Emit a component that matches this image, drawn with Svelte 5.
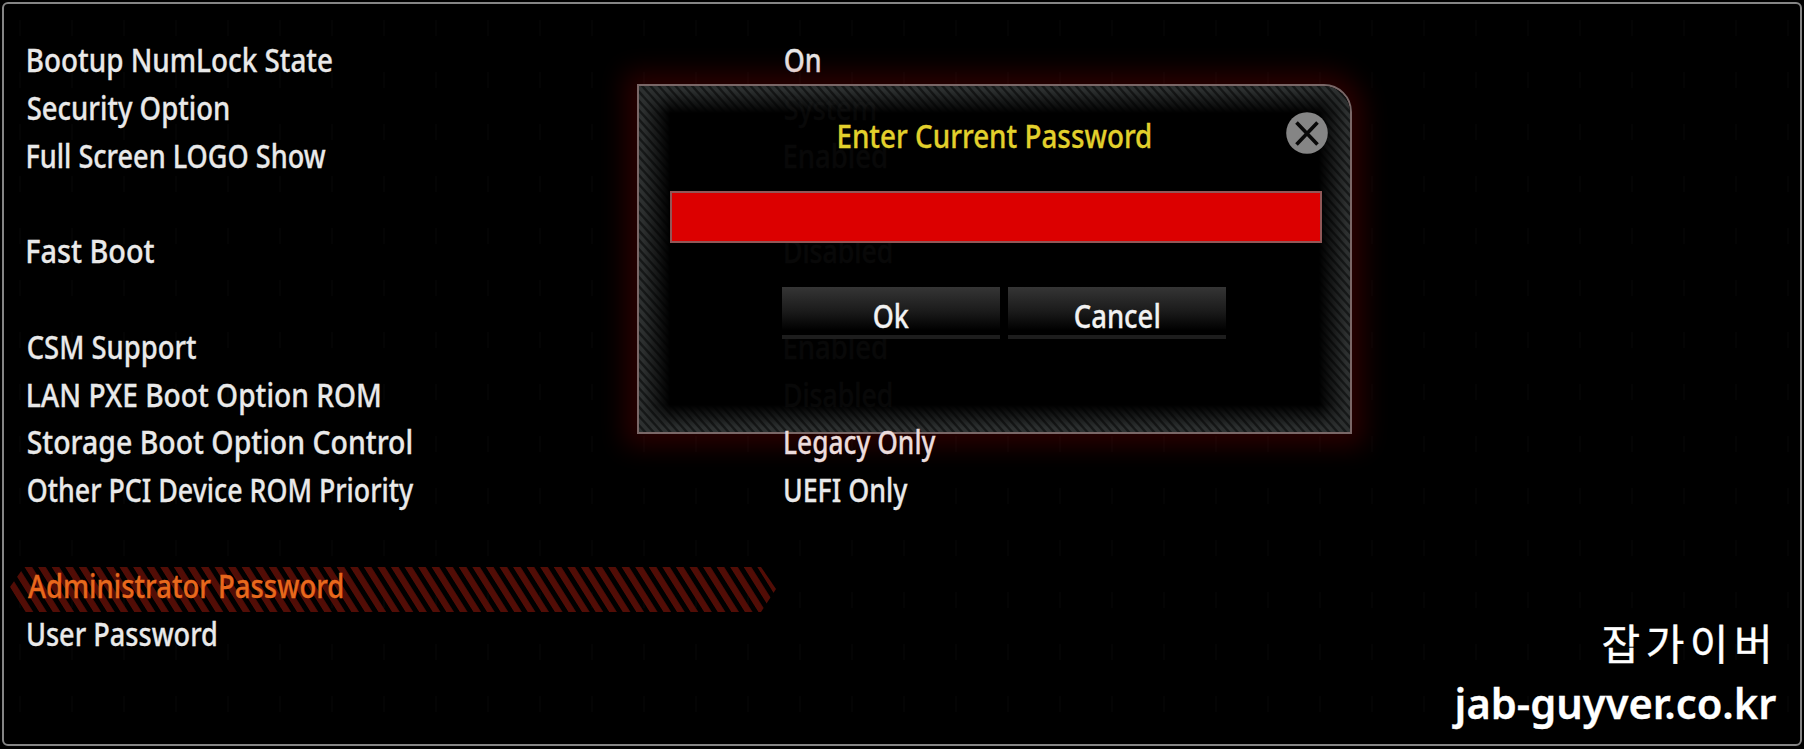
<script>
  const FAMILY = '"Noto Sans", "Open Sans", sans-serif';
  const ctx = document.createElement('canvas').getContext('2d');

  // Horizontal scale and offset that give a label the requested visible width.
  // Measured at ten times the size, because glyph bounds round to whole pixels.
  function fit(text, width, size, weight) {
    ctx.font = `${weight} ${size * 10}px ${FAMILY}`;
    const m = ctx.measureText(text);
    const left = m.actualBoundingBoxLeft / 10;
    const scale = width / (left + m.actualBoundingBoxRight / 10);
    return { scale, x: left * scale };
  }

  const rows = [
    { label: 'Bootup NumLock State', lw: 304, value: 'On', vw: 35 },
    { label: 'Security Option', lw: 200.5, value: 'System', vw: 90 },
    { label: 'Full Screen LOGO Show', lw: 297.5, value: 'Enabled', vw: 101 },
    null,
    { label: 'Fast Boot', lw: 126, value: 'Disabled', vw: 106.5 },
    null,
    { label: 'CSM Support', lw: 168, value: 'Enabled', vw: 101 },
    { label: 'LAN PXE Boot Option ROM', lw: 351.5, value: 'Disabled', vw: 106.5 },
    { label: 'Storage Boot Option Control', lw: 383.5, value: 'Legacy Only', vw: 150.5, raised: true },
    { label: 'Other PCI Device ROM Priority', lw: 385.5, value: 'UEFI Only', vw: 122.5 },
    null,
    { label: 'Administrator Password', lw: 314.5, selected: true },
    { label: 'User Password', lw: 188 }
  ];
</script>

{#snippet condensed(text, width, size = 32.5, weight = 500)}
  {@const f = fit(text, width, size, weight)}
  <svg class="condensed" width={width} height="47.8">
    <text
      transform="translate({f.x} 33.8) scale({f.scale} 1)"
      font-size={size}
      font-weight={weight}
      font-family={FAMILY}>{text}</text>
  </svg>
{/snippet}

<main class="screen">
  <section class="panel">
    <div class="options">
      {#each rows as row}
        <div class="row" class:selected={row?.selected}>
          {#if row}
            {#if row.selected}
              <svg class="highlight" width="768" height="46" viewBox="0 0 768 46">
                <defs>
                  <pattern id="hatch" width="13.57" height="46" patternUnits="userSpaceOnUse" patternTransform="translate(14.5 0) skewX(32.2)">
                    <rect width="7.6" height="46" fill="#520d06" />
                  </pattern>
                </defs>
                <path d="M14 0H751L766 22L751 45H14L0 20Z" fill="url(#hatch)" />
              </svg>
            {/if}
            <div class="name">{@render condensed(row.label, row.lw)}</div>
            {#if row.value}
              <div class="value" class:raised={row.raised}>{@render condensed(row.value, row.vw)}</div>
            {/if}
          {/if}
        </div>
      {/each}
    </div>
  </section>

  <section class="dialog" role="dialog" aria-modal="true">
    <div class="carbon"></div>
    <header>
      <h1>{@render condensed('Enter Current Password', 311.5)}</h1>
      <button class="close" aria-label="Close">
        <svg width="42" height="42" viewBox="0 0 42 42">
          <circle cx="21" cy="21" r="20.8" fill="#858585" />
          <path d="M10.5 10.5L31.5 32.5M31.5 10.5L10.5 32.5" stroke="#080808" stroke-width="3.6" />
        </svg>
      </button>
    </header>
    <input class="field" type="password" />
    <div class="actions">
      <button class="action">{@render condensed('Ok', 35)}</button>
      <button class="action">{@render condensed('Cancel', 84)}</button>
    </div>
  </section>

  <footer class="credit">
    <div class="korean">잡가이버</div>
    <div class="site">{@render condensed('jab-guyver.co.kr', 324, 41, 600)}</div>
  </footer>
</main>

<style>
  :global(body) {
    background: #000;
    overflow: hidden;
  }
  .screen {
    position: relative;
    box-sizing: border-box;
    width: 1804px;
    height: 749px;
    padding: 2px 2px 3px;
    background: #000;
    color: #e9e9e9;
  }
  .panel {
    box-sizing: border-box;
    height: 744px;
    padding: 34px 0 0 23.5px;
    border: 2px solid #858585;
    border-radius: 6px;
    background:
      repeating-linear-gradient(#000 0 16px, transparent 16px 32px, #000 32px 52px),
      repeating-linear-gradient(90deg, transparent 0 15px, #040404 15px 17px, transparent 17px 52px);
  }
  .options {
    display: flex;
    flex-direction: column;
  }
  .row {
    position: relative;
    display: grid;
    grid-template-columns: 757px 1fr;
    height: 47.8px;
  }
  .row.selected {
    color: #e8681c;
  }
  .name,
  .value {
    position: relative;
    height: 47.8px;
  }
  .value.raised {
    z-index: 2;
    color: #ecdcdc;
  }
  .highlight {
    position: absolute;
    left: -17.5px;
    top: 3px;
    filter: blur(0.7px);
  }
  .condensed {
    display: block;
    overflow: visible;
    fill: currentColor;
    stroke: currentColor;
    stroke-width: 0.3px;
  }
  .dialog {
    position: absolute;
    z-index: 1;
    left: 637px;
    top: 84px;
    box-sizing: border-box;
    width: 715px;
    height: 350px;
    padding: 0 29px 0 30.5px;
    border: 2px solid #7a6767;
    border-radius: 0 28px 0 0;
    background: rgba(0, 0, 0, 0.97);
    background-clip: padding-box;
    box-shadow: 0 0 26px 12px rgba(190, 0, 0, 0.22);
  }
  .carbon {
    position: absolute;
    inset: 0;
    overflow: hidden;
    border-radius: 0 26px 0 0;
    background: repeating-linear-gradient(48deg, #2d3030 0 2.8px, #161818 3.8px 5.2px, #2d3030 6.2px);
    mask:
      linear-gradient(90deg, #000 4px, transparent 31px, transparent calc(100% - 31px), #000 calc(100% - 4px)),
      linear-gradient(#000 4px, transparent 27px, transparent calc(100% - 27px), #000 calc(100% - 4px));
  }
  header {
    position: relative;
    display: flex;
    justify-content: space-between;
    height: 105px;
  }
  h1 {
    margin: 28px 0 0 169.5px;
    font-weight: 500;
    color: #e2d02c;
  }
  .close {
    width: 42px;
    height: 42px;
    margin: 26px -7px 0 0;
    padding: 0;
    border: 0;
    background: none;
  }
  .close svg {
    display: block;
  }
  .field {
    position: relative;
    display: block;
    box-sizing: border-box;
    width: 652px;
    height: 52px;
    padding: 0 12px;
    border: 2px solid #925757;
    border-radius: 0;
    background: #dc0000;
    outline: none;
  }
  .actions {
    position: relative;
    display: flex;
    gap: 8px;
    margin: 43.5px 0 0 112.5px;
  }
  .action {
    display: flex;
    justify-content: center;
    box-sizing: border-box;
    width: 218px;
    height: 52px;
    padding: 7.5px 0 0;
    border: 0;
    border-bottom: 4px solid #1d1d1d;
    background: linear-gradient(#353535, #1b1b1b 50%, #000 90%);
    color: #f2f2f2;
  }
  .credit {
    position: absolute;
    left: 1451.5px;
    top: 615px;
    color: #fff;
  }
  .korean {
    height: 70px;
    margin-left: 150px;
    font: 400 42px/54px "Noto Sans CJK KR", sans-serif;
    letter-spacing: 5.5px;
    white-space: nowrap;
    -webkit-text-stroke: 0.4px #fff;
  }
</style>
